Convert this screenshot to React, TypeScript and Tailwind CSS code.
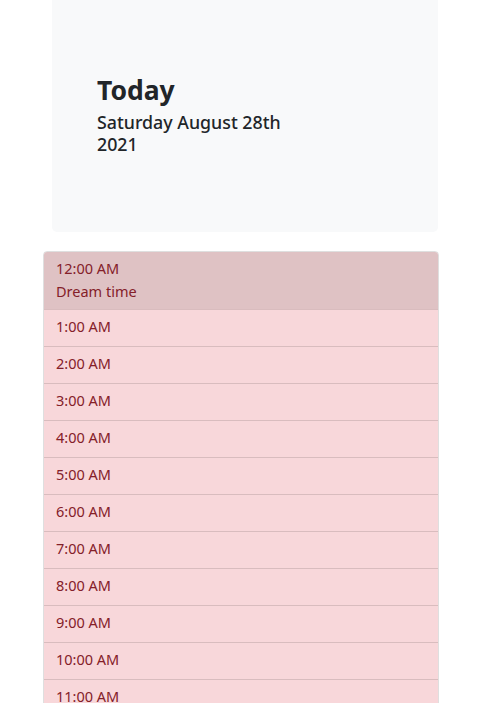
import React from "react";

const hours = [
  "1:00 AM",
  "2:00 AM",
  "3:00 AM",
  "4:00 AM",
  "5:00 AM",
  "6:00 AM",
  "7:00 AM",
  "8:00 AM",
  "9:00 AM",
  "10:00 AM",
  "11:00 AM",
  "12:00 PM",
];

export default function App() {
  return (
    <div
      className="min-h-[703px] bg-white text-[#212529]"
      style={{ fontFamily: "'Noto Sans', Lato, sans-serif" }}
    >
      <div className="ml-[52px] w-[386px] h-[232px] bg-[#f8f9fa] rounded-b-[5px] pl-[45px] pt-[73px]">
        <h1 className="text-[26.5px] leading-[34px] font-bold">Today</h1>
        <p className="mt-[4px] w-[200px] text-[17.8px] leading-[22px] font-medium">
          Saturday August 28th 2021
        </p>
      </div>
      <div className="mt-[19px] ml-[43px] w-[396px] border border-[rgba(0,0,0,0.125)] rounded-t-[4px] overflow-hidden text-[#842029] text-[14.5px]">
        <div className="bg-[#dfc2c4] px-[12px] pt-[5px] pb-[7px] leading-[22.5px]">
          <div>12:00 AM</div>
          <div>Dream time</div>
        </div>
        {hours.map((h) => (
          <div
            key={h}
            className="bg-[#f8d7da] border-t border-[rgba(0,0,0,0.125)] px-[12px] pt-[4px] pb-[8px] leading-[24px]"
          >
            {h}
          </div>
        ))}
      </div>
    </div>
  );
}
